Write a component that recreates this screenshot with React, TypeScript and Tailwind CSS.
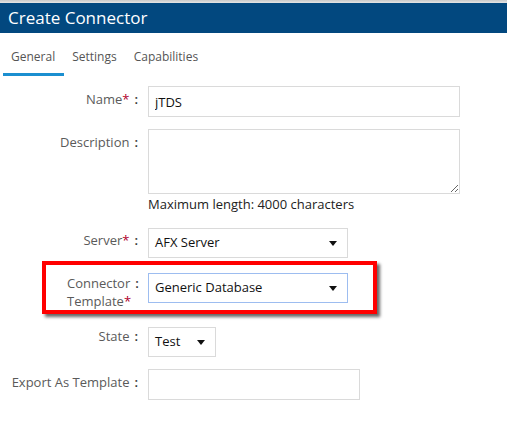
const Caret = () => (
  <svg width="8" height="5" viewBox="0 0 8 5" className="shrink-0">
    <path d="M0 0h8L4 5z" fill="#111" />
  </svg>
)

function Label({ text, req, className = '' }: { text: string; req?: boolean; className?: string }) {
  return (
    <div className={`w-[140px] shrink-0 pr-[2px] text-right leading-[18px] text-[#5a5a5a] ${className}`}>
      {text}
      {req && <span className="text-[#b0002a]">*</span>}
      <span className="ml-[5px] font-semibold text-[#333]">:</span>
    </div>
  )
}

function FakeSelect({ value, width, focus }: { value: string; width: string; focus?: boolean }) {
  return (
    <div
      className={`flex h-[30px] items-center justify-between border bg-white pl-[6px] pr-[10px] text-[#111] ${width} ${
        focus ? 'border-[#9dbdf0]' : 'border-[#dadada]'
      }`}
    >
      <span>{value}</span>
      <Caret />
    </div>
  )
}

export default function App() {
  return (
    <div className="h-[430px] w-[507px] overflow-hidden bg-white text-[13px]" style={{ fontFamily: '"Open Sans", "Liberation Sans", sans-serif' }}>
      <div className="h-[3px] bg-gradient-to-b from-[#c9c9c9] to-[#e6e6e6]" />
      <div className="flex h-[30px] items-center bg-[#02487f] pl-[8px] text-[17px] text-white">Create Connector</div>

      <div className="mt-[15px] flex pl-[3px] text-[12px] text-[#555]">
        <div className="border-b-[3px] border-[#1b8fd0] pb-[7px] pl-[8px] pr-[9px] leading-[18px]">General</div>
        <div className="pb-[7px] pl-[8px] pr-[9px] leading-[18px]">Settings</div>
        <div className="pb-[7px] pl-[8px] pr-[9px] leading-[18px]">Capabilities</div>
      </div>

      <div className="mt-[10px] flex flex-col">
        <div className="flex gap-[8px]">
          <Label text="Name" req className="pt-[4px]" />
          <input
            readOnly
            value="jTDS"
            className="h-[31px] w-[312px] border border-[#dadada] pl-[6px] text-[#111] outline-none"
          />
        </div>

        <div className="mt-[12px] flex gap-[8px]">
          <Label text="Description" className="pt-[4px]" />
          <div className="flex flex-col">
            <textarea readOnly className="h-[65px] w-[312px] border border-[#dadada] outline-none" />
            <div className="mt-[1px] leading-[18px] text-[#222]">Maximum length: 4000 characters</div>
          </div>
        </div>

        <div className="mt-[15px] flex gap-[8px]">
          <Label text="Server" req className="pt-[3px]" />
          <FakeSelect value="AFX Server" width="w-[200px]" />
        </div>

        <div className="relative mt-[15px] flex gap-[8px]">
          <div className="w-[140px] shrink-0 pl-[67px] pt-[1px] leading-[18px] text-[#5a5a5a]">
            <div>
              Connector<span className="ml-[5px] font-semibold text-[#333]">:</span>
            </div>
            <div>
              Template<span className="text-[#b0002a]">*</span>
            </div>
          </div>
          <FakeSelect value="Generic Database" width="w-[200px]" focus />
          <div className="absolute left-[42px] top-[-12px] h-[53px] w-[335px] border-[4px] border-[#ff0000] shadow-[3px_3px_3px_rgba(0,0,0,0.6)]" />
        </div>

        <div className="mt-[17px] flex gap-[8px]">
          <Label text="State" />
          <FakeSelect value="Test" width="w-[68px]" />
        </div>

        <div className="mt-[12px] flex gap-[8px]">
          <Label text="Export As Template" className="pt-[4px]" />
          <input readOnly className="h-[31px] w-[212px] border border-[#dadada] outline-none" />
        </div>
      </div>
    </div>
  )
}
